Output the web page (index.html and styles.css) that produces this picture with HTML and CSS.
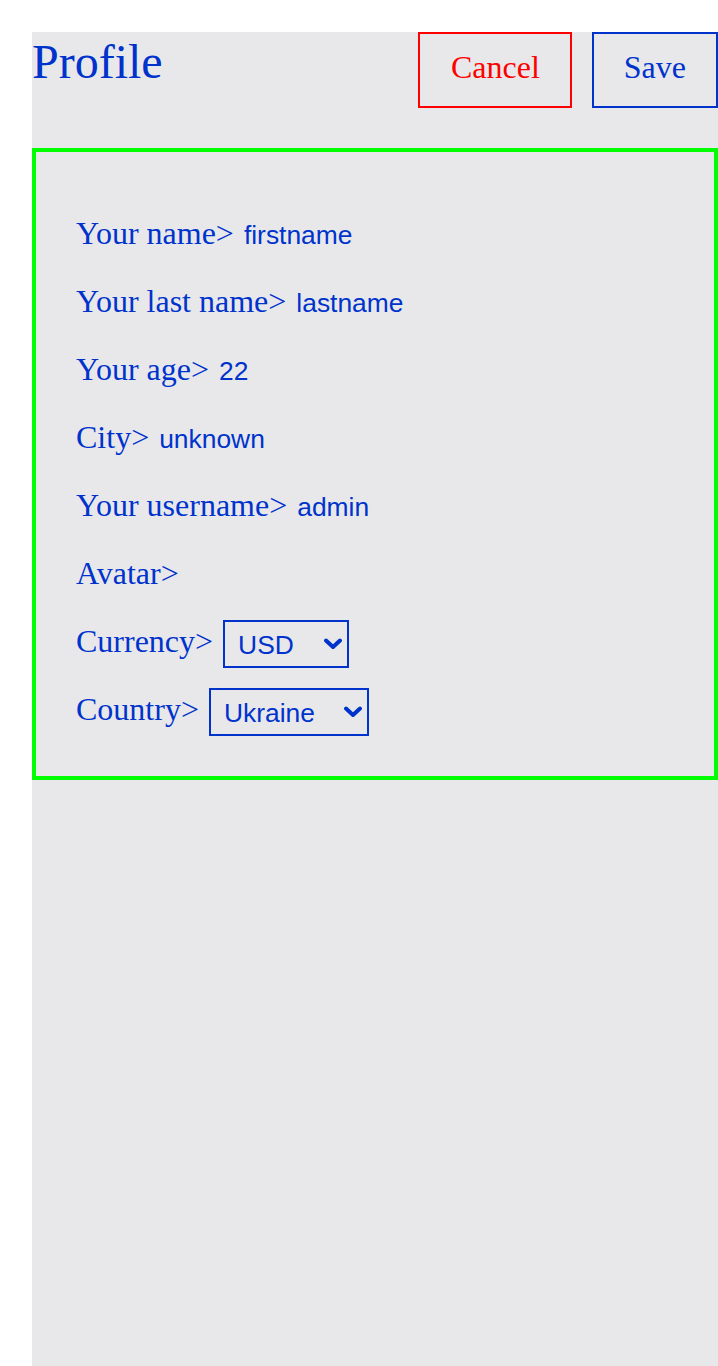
FILE: index.html
```html
<!DOCTYPE html>
<html lang="en">
<head>
<meta charset="utf-8">
<title>Profile</title>
<link rel="stylesheet" href="styles.css">
</head>
<body>
<div class="page">
  <header class="header">
    <h1 class="title">Profile</h1>
    <div class="actions">
      <button class="btn btn-cancel" type="button">Cancel</button>
      <button class="btn btn-save" type="button">Save</button>
    </div>
  </header>
  <section class="card">
    <div class="row"><span class="label">Your name&gt;</span><span class="value">firstname</span></div>
    <div class="row"><span class="label">Your last name&gt;</span><span class="value">lastname</span></div>
    <div class="row"><span class="label">Your age&gt;</span><span class="value">22</span></div>
    <div class="row"><span class="label">City&gt;</span><span class="value">unknown</span></div>
    <div class="row"><span class="label">Your username&gt;</span><span class="value">admin</span></div>
    <div class="row"><span class="label">Avatar&gt;</span></div>
    <div class="row">
      <span class="label">Currency&gt;</span>
      <span class="select-wrap select-currency">
        <select class="select"><option>USD</option><option>EUR</option><option>RUB</option></select>
        <svg class="chevron" width="18" height="12" viewBox="0 0 18 12"><path d="M2 2.5 L9 9 L16 2.5" fill="none" stroke="currentColor" stroke-width="4" stroke-linecap="round" stroke-linejoin="round"/></svg>
      </span>
    </div>
    <div class="row">
      <span class="label">Country&gt;</span>
      <span class="select-wrap select-country">
        <select class="select"><option>Ukraine</option><option>Russia</option><option>Belarus</option></select>
        <svg class="chevron" width="18" height="12" viewBox="0 0 18 12"><path d="M2 2.5 L9 9 L16 2.5" fill="none" stroke="currentColor" stroke-width="4" stroke-linecap="round" stroke-linejoin="round"/></svg>
      </span>
    </div>
  </section>
</div>
</body>
</html>
```

FILE: styles.css
```css
html, body {
  margin: 0;
  padding: 0;
  background: #ffffff;
}

body {
  padding: 32px 0 0 32px;
  font-family: "Liberation Serif", "Times New Roman", serif;
  color: #0033cc;
}

.page {
  background: #e8e8eb;
  min-height: 1334px;
  display: flex;
  flex-direction: column;
  gap: 40px;
}

.header {
  display: flex;
  justify-content: space-between;
  align-items: flex-start;
}

.title {
  margin: 0;
  font-size: 48px;
  font-weight: normal;
  line-height: 48px;
  padding-top: 6px;
}

.actions {
  display: flex;
  gap: 20px;
}

.btn {
  height: 76px;
  padding: 0 30px 6px 30px;
  background: transparent;
  border: 2px solid #0033cc;
  color: #0033cc;
  font-family: "Liberation Serif", "Times New Roman", serif;
  font-size: 32px;
  line-height: 1;
  margin: 0;
}

.btn-cancel {
  border-color: #ff0000;
  color: #ff0000;
  padding-left: 31px;
}

.card {
  border: 4px solid #00ff00;
  padding: 60px 40px 40px 40px;
  display: flex;
  flex-direction: column;
  gap: 20px;
}

.row {
  height: 48px;
  display: flex;
  align-items: center;
  gap: 10px;
}

.label {
  font-size: 32px;
  padding-bottom: 6px;
}

.value {
  font-family: "Liberation Sans", Arial, sans-serif;
  font-size: 26.4px;
  padding-bottom: 2px;
}

.select-wrap {
  position: relative;
  display: inline-flex;
}

.select {
  appearance: none;
  -webkit-appearance: none;
  height: 48px;
  margin: 0;
  padding: 2px 0 0 13px;
  border: 2px solid #0033cc;
  border-radius: 0;
  background: transparent;
  color: #0033cc;
  font-family: "Liberation Sans", Arial, sans-serif;
  font-size: 26.4px;
}

.select-currency .select {
  width: 126px;
}

.select-country .select {
  width: 160px;
}

.chevron {
  position: absolute;
  right: 7px;
  top: 18px;
  color: #0033cc;
  pointer-events: none;
}
```
